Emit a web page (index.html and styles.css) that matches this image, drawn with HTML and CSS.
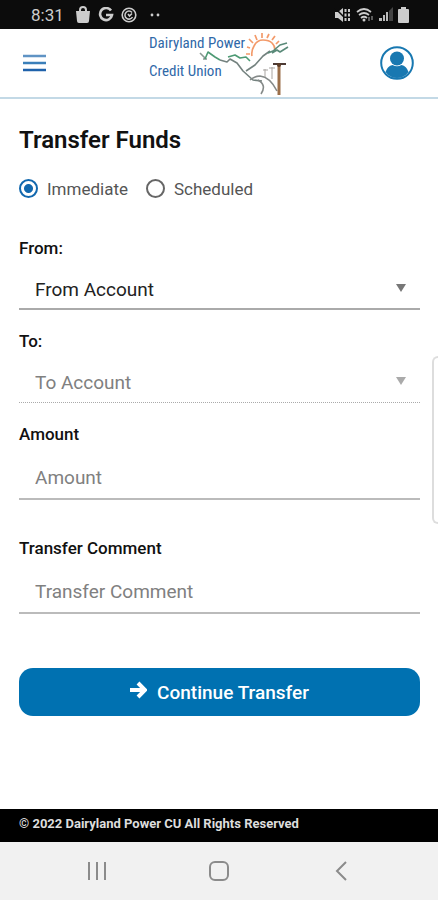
FILE: index.html
```html
<!DOCTYPE html>
<html lang="en">
<head>
    <meta charset="utf-8">
    <meta name="viewport" content="width=device-width, initial-scale=1">
    <title>Transfer Funds</title>
    <link rel="stylesheet" href="styles.css">
</head>
<body>
    <div class="status-bar">
        <div class="status-left">
            <span class="clock">8:31</span>
            <svg width="16" height="18" viewBox="0 0 16 18">
                <path d="M5 6V4a3 3 0 0 1 6 0v2" fill="none" stroke="#ccc" stroke-width="2"/>
                <path d="M1 5h14l-1 10q0 2-2 2H4q-2 0-2-2z" fill="#ccc"/>
            </svg>
            <svg width="16" height="16" viewBox="0 0 16 16">
                <path d="M13 3.600A6 6 0 1 0 14 8H8" fill="none" stroke="#ccc" stroke-width="2.600"/>
            </svg>
            <svg width="16" height="16" viewBox="0 0 16 16" fill="none" stroke="#ccc">
                <circle cx="8" cy="8" r="6.800" stroke-width="1.600"/>
                <path d="M11 5.500A4 4 0 1 0 11.500 10" stroke-width="1.500"/>
                <path d="M7 7l1.500 2L11 6.500" stroke-width="1.600"/>
            </svg>
            <svg width="10" height="4" viewBox="0 0 10 4" fill="#ccc">
                <circle cx="2" cy="2" r="1.400"/>
                <circle cx="8" cy="2" r="1.400"/>
            </svg>
        </div>
        <div class="status-right">
            <svg width="17" height="16" viewBox="0 0 17 16">
                <path d="M1 5h3l5-4v14l-5-4H1z" fill="#ccc"/>
                <path d="M1 1l14 14" stroke="#0c0c0c" stroke-width="1.500"/>
                <path d="M11.500 2v12M15 2v12" fill="none" stroke="#ccc" stroke-width="2" stroke-dasharray="3 1.500"/>
            </svg>
            <svg width="18" height="16" viewBox="0 0 18 16">
                <g fill="none" stroke="#ccc" stroke-width="1.700">
                    <path d="M1 5q7-6 14 0"/>
                    <path d="M3 8q5-4 10 0"/>
                    <path d="M5 11q3-2.500 6 0"/>
                </g>
                <circle cx="8" cy="13" r="1.500" fill="#ccc"/>
                <path d="M13 10v4M16 9v4" stroke="#777" stroke-width="1.500"/>
            </svg>
            <svg width="14" height="15" viewBox="0 0 14 15">
                <path d="M0 14h3v-3H0zM4 14h2V8H4zM7 14h2V5H7z" fill="#bbb"/>
                <path d="M10 14h4V0l-4 4z" fill="#444"/>
            </svg>
            <svg width="11" height="16" viewBox="0 0 11 16">
                <path d="M3 0h5v2h2q1 0 1 1v12q0 1-1 1H1q-1 0-1-1V3q0-1 1-1h2z" fill="#ccc"/>
            </svg>
        </div>
    </div>

    <header class="header">
        <button class="icon-button" type="button" aria-label="Menu">
            <svg width="24" height="18" viewBox="0 0 24 18">
                <path d="M0 2h23" stroke="#5f93c4" stroke-width="2.500"/>
                <path d="M0 9h23" stroke="#3a7fb9" stroke-width="2.500"/>
                <path d="M0 16h23" stroke="#1f62ab" stroke-width="2.500"/>
            </svg>
        </button>
        <a class="logo" href="#" aria-label="Dairyland Power Credit Union">
            <svg width="140" height="66" viewBox="0 0 140 66">
                <text class="logo-text" x="0" y="18">Dairyland Power</text>
                <text class="logo-text" x="0" y="46">Credit Union</text>
                <!-- sun -->
                <g fill="none" stroke="#f39a6a" stroke-width="1.700">
                    <path d="M103 26q-1-5 2-10 3-6 9-6 6 0 9 3 3 3 3 7"/>
                    <path d="M101 24h-4M101 18l-3-1M104 13l-4-4M108 10l-2-5M113 8V3M118 8l2-4M123 10l3-4M127 14l3-3"/>
                </g>
                <!-- hills -->
                <g fill="none" stroke-width="1.600" stroke-linejoin="round">
                    <path d="M51 23l6 6M54 29h4" stroke="#8b9893"/>
                    <path d="M56 29l3-7 7 5 5 3" stroke="#4d9a74"/>
                    <path d="M79 27l7-2 5 3 6-1 4 4" stroke="#4d9a74"/>
                    <path d="M71 30l7 2 3-3 7 4 6 8 10 9 9 1" stroke="#74827f"/>
                    <path d="M97 41l9-6 8-9 7-5" stroke="#74827f"/>
                    <path d="M119 23l5-2 7-6 7-2M123 23l5-3 3 2 8-5" stroke="#5a8a79"/>
                    <path d="M101 50q5-4 10-4 10 1 17 15M109 50q9 5 3 14" stroke="#858a89"/>
                </g>
                <!-- power poles -->
                <path d="M116 39v8M123 37v12M114 40h5M120 38h6" fill="none" stroke="#a9a5a2"/>
                <path d="M130 33v32" stroke="#9b6f4a" stroke-width="3"/>
                <path d="M124 34h13" stroke="#4d3b35" stroke-width="2"/>
                <circle cx="130" cy="35" r="2" fill="#5b3c28"/>
            </svg>
        </a>
        <button class="icon-button" type="button" aria-label="Profile">
            <svg width="34" height="34" viewBox="0 0 34 34">
                <circle cx="17" cy="17" r="15.800" fill="#fff" stroke="#1878b1" stroke-width="2"/>
                <circle cx="17" cy="12.500" r="7" fill="#1878b1"/>
                <path d="M5.500 26q2-6 7-7 4.500 2.500 9 0 5 1 7 7-4.500 6-11.500 6T5.500 26z" fill="#1878b1"/>
            </svg>
        </button>
    </header>

    <main class="main">
        <h1>Transfer Funds</h1>
        <form>
            <div class="radios">
                <label><input type="radio" name="when" checked> Immediate</label>
                <label><input type="radio" name="when"> Scheduled</label>
            </div>

            <div class="field">
                <label for="from">From:</label>
                <div class="select">
                    <select id="from">
                        <option>From Account</option>
                    </select>
                </div>
            </div>
            <div class="field">
                <label for="to">To:</label>
                <div class="select disabled">
                    <select id="to" disabled>
                        <option>To Account</option>
                    </select>
                </div>
            </div>
            <div class="field wide">
                <label for="amount">Amount</label>
                <input type="text" id="amount" placeholder="Amount">
            </div>
            <div class="field">
                <label for="comment">Transfer Comment</label>
                <input type="text" id="comment" placeholder="Transfer Comment">
            </div>

            <button class="submit" type="submit">
                <svg width="17" height="22" viewBox="0 0 17 22">
                    <path d="M0 9h14M8 2l7 7-7 7" fill="none" stroke="#fff" stroke-width="4"/>
                </svg>
                Continue Transfer
            </button>
        </form>
    </main>

    <footer class="footer">© 2022 Dairyland Power CU All Rights Reserved</footer>

    <nav class="nav-bar">
        <button type="button" aria-label="Recent apps">
            <svg width="20" height="20" viewBox="0 0 20 20">
                <path d="M2 1v18M10 1v18M18 1v18" stroke="#8b8b8b" stroke-width="2"/>
            </svg>
        </button>
        <button type="button" aria-label="Home">
            <svg width="20" height="20" viewBox="0 0 20 20">
                <rect x="1" y="1" width="18" height="18" rx="5" fill="none" stroke="#8b8b8b" stroke-width="2"/>
            </svg>
        </button>
        <button type="button" aria-label="Back">
            <svg width="20" height="20" viewBox="0 0 20 20">
                <path d="M15 1l-9 9 9 9" fill="none" stroke="#8b8b8b" stroke-width="2"/>
            </svg>
        </button>
    </nav>

    <div class="edge-handle"></div>
</body>
</html>
```
FILE: styles.css
```css
* {
    box-sizing: border-box;
}

body {
    margin: 0;
    min-height: 100vh;
    display: flex;
    flex-direction: column;
    background: #fff;
    color: #111;
    font-family: Roboto, sans-serif;
}

svg {
    display: block;
}

button {
    border: none;
    background: none;
    padding: 0;
    font-family: inherit;
    cursor: pointer;
}

.status-bar {
    height: 29px;
    padding: 0 29px 0 31px;
    display: flex;
    justify-content: space-between;
    align-items: center;
    background: #0c0c0c;
}

.status-left,
.status-right {
    display: flex;
    align-items: center;
    gap: 7px;
}

.clock {
    color: #ccc;
    font-size: 17px;
    margin-right: 4px;
}

.status-left svg:last-child {
    margin-left: 6px;
}

.status-right {
    gap: 5px;
}

.header {
    height: 70px;
    padding: 0 24px 0 23px;
    display: grid;
    grid-template-columns: 1fr auto 1fr;
    align-items: center;
    border-bottom: 2px solid #c3d9e6;
}

.icon-button:first-child {
    justify-self: start;
}

.icon-button:last-child {
    justify-self: end;
}

.logo-text {
    fill: #2f68a8;
    font-family: "Liberation Sans Narrow", "Roboto Condensed", Roboto, sans-serif;
    font-size: 15px;
}

.main {
    flex: 1;
    padding: 26px 18px 24px 19px;
}

h1 {
    margin: 0;
    font-size: 24px;
    line-height: 30px;
    font-weight: 600;
}

.radios {
    display: flex;
    gap: 18px;
    margin: 23px 0 39px;
}

.radios label {
    display: flex;
    align-items: center;
    gap: 9px;
    height: 21px;
    color: #555;
    font-size: 17px;
}

.radios input {
    appearance: none;
    margin: 0;
    width: 19px;
    height: 19px;
    border: 2px solid #666;
    border-radius: 50%;
}

.radios input:checked {
    border-color: #1268ae;
    background: radial-gradient(circle, #1268ae 4px, #fff 5px);
}

.field {
    margin-bottom: 21px;
}

.field.wide {
    margin-bottom: 38px;
}

.field > label {
    display: block;
    margin-bottom: 12px;
    font-size: 17px;
    line-height: 20px;
    font-weight: 500;
}

.field select,
.field input {
    display: block;
    width: 100%;
    height: 44px;
    padding: 0 16px;
    appearance: none;
    border: none;
    border-bottom: 2px solid #bbb;
    border-radius: 0;
    background: none;
    color: #222;
    font-family: inherit;
    font-size: 19px;
}

.field select {
    height: 40px;
    border-color: #aaa;
    opacity: 1;
}

.field select:disabled {
    color: #808080;
    border-bottom-style: dotted;
    border-bottom-width: 1px;
}

.field input::placeholder {
    color: #808080;
}

.select {
    position: relative;
}

.select::after {
    content: "";
    position: absolute;
    right: 14px;
    top: 14px;
    border: 5px solid transparent;
    border-top: 8px solid #777;
    border-bottom: none;
    pointer-events: none;
}

.select.disabled::after {
    border-top-color: #aaa;
}

.submit {
    display: flex;
    justify-content: center;
    align-items: center;
    gap: 10px;
    width: 100%;
    height: 48px;
    margin-top: 54px;
    border-radius: 14px;
    background: #0071b1;
    color: #fff;
    font-size: 19px;
    font-weight: 500;
}

.footer {
    padding: 5px 19px 8px;
    background: #000;
    color: #ddd;
    font-size: 13px;
    line-height: 20px;
    font-weight: 700;
}

.nav-bar {
    display: grid;
    grid-template-columns: repeat(3, 1fr);
    height: 58px;
    padding: 0 36px;
    background: #f1f1f1;
}

.nav-bar button {
    display: flex;
    justify-content: center;
    align-items: center;
}

/* edge panel tab over the page */
.edge-handle {
    position: fixed;
    right: 0;
    top: 356px;
    width: 6px;
    height: 168px;
    border: 2px solid #ddd;
    border-right: none;
    border-radius: 8px 0 0 8px;
    background: #fff;
}
```
